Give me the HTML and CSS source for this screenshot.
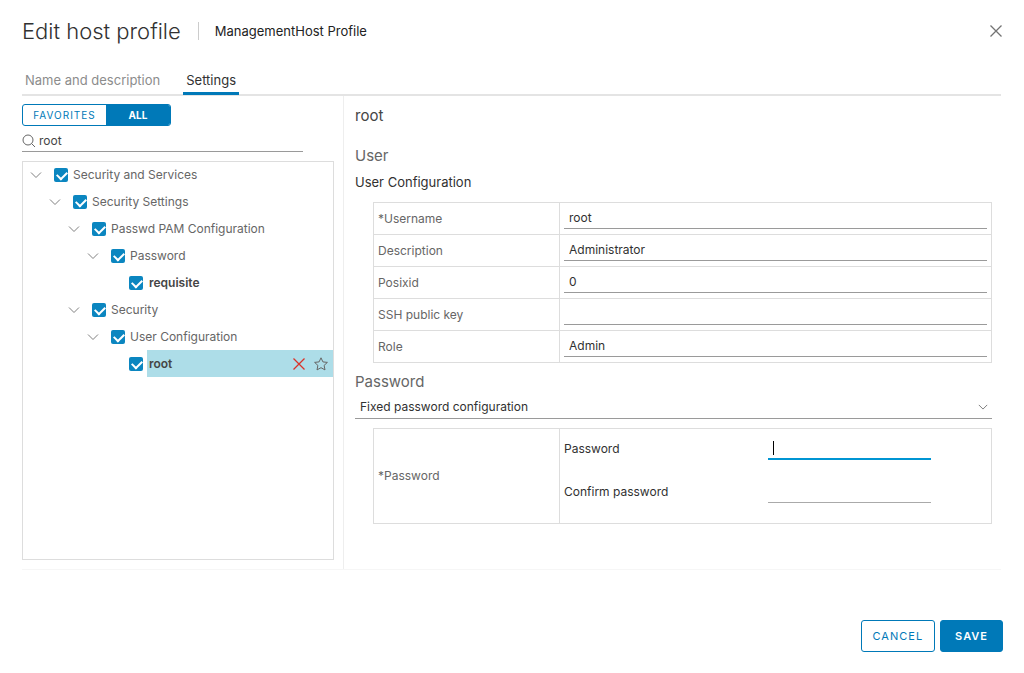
FILE: index.html
```html
<!DOCTYPE html>
<html lang="en">
  <head>
    <meta charset="utf-8">
    <title>Edit host profile</title>
    <link rel="stylesheet" href="styles.css">
  </head>

  <body>
    <svg class="sprite" aria-hidden="true">
      <symbol id="chevron" viewBox="0 0 12 12"><path d="M1 3.5l5 5 5-5" fill="none" stroke="currentColor"/></symbol>
      <symbol id="cross" viewBox="0 0 14 14"><path d="M1.5 1.5l11 11M12.5 1.5l-11 11" fill="none" stroke="currentColor" stroke-width="1.3"/></symbol>
    </svg>

    <div class="dialog">
      <header class="dialog-header">
        <h1 class="title">Edit host profile</h1>
        <span class="subtitle">ManagementHost Profile</span>
        <button class="close" aria-label="Close"><svg class="icon-close"><use href="#cross"/></svg></button>
      </header>

      <nav class="tabs">
        <a class="tab" href="#">Name and description</a>
        <a class="tab active" href="#">Settings</a>
      </nav>

      <main class="content">
        <section class="sidebar">
          <div class="toggle">
            <button class="toggle-button">FAVORITES</button>
            <button class="toggle-button selected">ALL</button>
          </div>

          <div class="search">
            <svg class="icon-search" viewBox="0 0 14 14"><circle cx="6" cy="6" r="5" fill="none" stroke="currentColor"/><path d="M9.6 9.6l3.4 3.4" stroke="currentColor"/></svg>
            <input class="search-input" type="text" value="root" aria-label="Search">
          </div>

          <ul class="tree">
            <li>
              <div class="node">
                <svg class="chevron"><use href="#chevron"/></svg>
                <input class="check" type="checkbox" id="services" checked>
                <label class="node-label" for="services">Security and Services</label>
              </div>
              <ul class="branch">
                <li>
                  <div class="node">
                    <svg class="chevron"><use href="#chevron"/></svg>
                    <input class="check" type="checkbox" id="settings" checked>
                    <label class="node-label" for="settings">Security Settings</label>
                  </div>
                  <ul class="branch">
                    <li>
                      <div class="node">
                        <svg class="chevron"><use href="#chevron"/></svg>
                        <input class="check" type="checkbox" id="pam" checked>
                        <label class="node-label" for="pam">Passwd PAM Configuration</label>
                      </div>
                      <ul class="branch">
                        <li>
                          <div class="node">
                            <svg class="chevron"><use href="#chevron"/></svg>
                            <input class="check" type="checkbox" id="passwordNode" checked>
                            <label class="node-label" for="passwordNode">Password</label>
                          </div>
                          <ul class="branch">
                            <li>
                              <div class="node leaf">
                                <input class="check" type="checkbox" id="requisite" checked>
                                <label class="node-label" for="requisite">requisite</label>
                              </div>
                            </li>
                          </ul>
                        </li>
                      </ul>
                    </li>
                    <li>
                      <div class="node">
                        <svg class="chevron"><use href="#chevron"/></svg>
                        <input class="check" type="checkbox" id="security" checked>
                        <label class="node-label" for="security">Security</label>
                      </div>
                      <ul class="branch">
                        <li>
                          <div class="node">
                            <svg class="chevron"><use href="#chevron"/></svg>
                            <input class="check" type="checkbox" id="userConfig" checked>
                            <label class="node-label" for="userConfig">User Configuration</label>
                          </div>
                          <ul class="branch">
                            <li>
                              <div class="node leaf">
                                <input class="check" type="checkbox" id="root" checked>
                                <div class="current">
                                  <label class="current-label" for="root">root</label>
                                  <button class="node-button remove" aria-label="Remove"><svg class="icon-small"><use href="#cross"/></svg></button>
                                  <button class="node-button" aria-label="Favorite"><svg class="icon-small" viewBox="0 0 14 14"><path d="M7 .8l1.9 4.1 4.5.5-3.3 3 .9 4.5L7 10.7l-4 2.2.9-4.5-3.3-3 4.5-.5z" fill="none" stroke="currentColor" stroke-linejoin="round"/></svg></button>
                                </div>
                              </div>
                            </li>
                          </ul>
                        </li>
                      </ul>
                    </li>
                  </ul>
                </li>
              </ul>
            </li>
          </ul>
        </section>

        <section class="details">
          <h2 class="heading main-heading">root</h2>
          <h3 class="heading">User</h3>
          <h4 class="subheading">User Configuration</h4>

          <table class="properties">
            <tr>
              <th class="name"><label for="username">*Username</label></th>
              <td class="value"><input class="field" type="text" id="username" value="root"></td>
            </tr>
            <tr>
              <th class="name"><label for="description">Description</label></th>
              <td class="value"><input class="field" type="text" id="description" value="Administrator"></td>
            </tr>
            <tr>
              <th class="name"><label for="posixid">Posixid</label></th>
              <td class="value"><input class="field" type="text" id="posixid" value="0"></td>
            </tr>
            <tr>
              <th class="name"><label for="sshKey">SSH public key</label></th>
              <td class="value"><input class="field" type="text" id="sshKey"></td>
            </tr>
            <tr>
              <th class="name"><label for="role">Role</label></th>
              <td class="value"><input class="field" type="text" id="role" value="Admin"></td>
            </tr>
          </table>

          <h3 class="heading password-heading">Password</h3>
          <div class="select-wrap">
            <select class="select" aria-label="Password type">
              <option>Fixed password configuration</option>
            </select>
            <svg class="select-arrow"><use href="#chevron"/></svg>
          </div>

          <table class="properties">
            <tr>
              <th class="name">*Password</th>
              <td class="passwords">
                <div class="password-row">
                  <label class="password-label" for="password">Password</label>
                  <div class="password-box editing"><input class="password-field" type="password" id="password"></div>
                </div>
                <div class="password-row">
                  <label class="password-label" for="confirm">Confirm password</label>
                  <div class="password-box"><input class="password-field" type="password" id="confirm"></div>
                </div>
              </td>
            </tr>
          </table>
        </section>
      </main>

      <footer class="dialog-footer">
        <button class="button">CANCEL</button>
        <button class="button primary">SAVE</button>
      </footer>
    </div>
  </body>
</html>
```

FILE: styles.css
```css
* {
  box-sizing: border-box;
}

body {
  margin: 0;
  background-color: #fff;
  color: #666;
  font-family: Inter, "Open Sans", sans-serif;
  font-size: 12px;
  line-height: 16px;
}

button, input, select {
  margin: 0;
  padding: 0;
  border: 0;
  border-radius: 0;
  background: none;
  color: inherit;
  font: inherit;
  outline: none;
}

h1, h2, h3, h4, ul {
  margin: 0;
  padding: 0;
  list-style: none;
  font-weight: normal;
}

.sprite {
  display: none;
}

.dialog {
  display: flex;
  flex-direction: column;
  min-height: 100vh;
  padding: 0 21px 0 22px;
}

.dialog-header {
  display: flex;
  align-items: center;
  height: 62px;
}

.title {
  padding-right: 17px;
  color: #313131;
  font-size: 22px;
  font-weight: 300;
}

.subtitle {
  padding-left: 16px;
  border-left: 1px solid #ccc;
  color: #222;
  font-size: 13px;
  line-height: 18px;
}

.close {
  display: flex;
  margin-left: auto;
  color: #737373;
}

.icon-close {
  width: 14px;
  height: 14px;
}

.tabs {
  display: flex;
  gap: 20px;
  height: 34px;
  margin-right: 2px;
  border-bottom: 2px solid #e4e4e4;
}

.tab {
  height: 33px;
  padding: 8px 3px 0;
  color: #8c8c8c;
  font-size: 13px;
  line-height: 20px;
  text-decoration: none;
}

.active {
  border-bottom: 3px solid #0079b8;
  color: #313131;
}

.content {
  display: flex;
  flex: 1;
  margin-right: 2px;
  border-bottom: 1px solid #f6f6f6;
}

.sidebar {
  display: flex;
  flex-direction: column;
  width: 322px;
  padding: 8px 9px 9px 0;
  border-right: 1px solid #eee;
}

.toggle {
  display: flex;
  width: 149px;
  height: 22px;
  border: 1px solid #0079b8;
  border-radius: 3px;
  overflow: hidden;
}

.toggle-button {
  width: 83px;
  color: #0079b8;
  font-size: 10px;
  letter-spacing: 1px;
}

.toggle-button.selected {
  flex: 1;
  background-color: #0079b8;
  color: #fff;
  font-weight: bold;
  letter-spacing: 0;
}

.search {
  display: flex;
  align-items: center;
  gap: 3px;
  width: 281px;
  height: 26px;
  margin-bottom: 9px;
  padding-top: 4px;
  border-bottom: 1px solid #9a9a9a;
}

.icon-search {
  width: 14px;
  height: 14px;
}

.search-input {
  flex: 1;
  color: #454545;
}

.tree {
  flex: 1;
  border: 1px solid #ddd;
}

.node {
  display: flex;
  align-items: center;
  height: 27px;
  padding: 0 0 2px 7px;
}

.branch .node {
  padding-left: 26px;
}

.branch .branch .node {
  padding-left: 45px;
}

.branch .branch .branch .node {
  padding-left: 64px;
}

.branch .branch .branch .node.leaf {
  padding-left: 106px;
}

.chevron {
  width: 12px;
  height: 12px;
  margin-right: 12px;
  color: #808080;
}

.check {
  appearance: none;
  width: 14px;
  height: 14px;
  margin-right: 5px;
  border-radius: 2px;
  background-color: #0b86c0;
}

.check:checked::after {
  content: "";
  display: block;
  width: 8px;
  height: 5px;
  margin: 3px;
  border: solid #fff;
  border-width: 0 0 2px 2px;
  transform: rotate(-45deg);
}

.leaf .node-label {
  font-weight: 600;
  color: #454545;
}

.leaf .check {
  margin-right: 4px;
}

.leaf .node-label {
  padding-left: 2px;
}

.current {
  display: flex;
  flex: 1;
  align-items: center;
  height: 27px;
  padding: 0 5px 0 2px;
  background-color: #addde8;
}

.current-label {
  flex: 1;
  color: #454545;
  font-weight: 600;
}

.node-button {
  display: flex;
  margin-left: 8px;
}

.remove {
  color: #d9332a;
}

.icon-small {
  width: 14px;
  height: 14px;
}

.details {
  flex: 1;
  padding: 9px 9px 0 11px;
}

.heading {
  font-size: 15px;
  line-height: 22px;
}

.main-heading {
  margin-bottom: 18px;
  color: #454545;
}

.subheading {
  margin: 7px 0 12px;
  color: #313131;
  font-size: 13px;
}

.properties {
  width: calc(100% - 18px);
  margin-left: 18px;
  border-collapse: collapse;
  table-layout: fixed;
}

.name, .value, .passwords {
  border: 1px solid #ddd;
  text-align: left;
}

.name {
  width: 186px;
  padding: 0 4px;
  font-weight: normal;
}

.value {
  height: 32px;
  padding: 3px 4px 5px;
}

.field {
  display: block;
  width: 100%;
  height: 23px;
  padding: 0 5px;
  border-bottom: 1px solid #9a9a9a;
  color: #313131;
}

.password-heading {
  margin-top: 8px;
}

.select-wrap {
  display: flex;
  align-items: center;
  height: 26px;
  margin-bottom: 9px;
  padding-top: 3px;
  border-bottom: 1px solid #9a9a9a;
}

.select {
  appearance: none;
  flex: 1;
  padding-left: 5px;
  color: #313131;
}

.select-arrow {
  width: 10px;
  height: 10px;
  margin-right: 4px;
}

.passwords {
  padding: 9px 4px;
  color: #313131;
}

.password-row {
  display: flex;
  align-items: center;
  height: 22px;
}

.password-row + .password-row {
  margin: 21px 0 11px;
}

.password-label {
  width: 204px;
}

.password-box {
  position: relative;
  width: 163px;
  height: 22px;
  border-bottom: 1px solid #aaa;
}

.password-field {
  width: 100%;
  height: 20px;
  padding: 0 5px;
}

.editing {
  border-bottom: 2px solid #0095d3;
}

/* text cursor */
.editing::before {
  content: "";
  position: absolute;
  top: 3px;
  left: 5px;
  width: 1px;
  height: 14px;
  background-color: #000;
}

.dialog-footer {
  display: flex;
  justify-content: flex-end;
  gap: 5px;
  padding: 50px 0 21px;
}

.button {
  height: 32px;
  padding: 0 11px;
  border: 1px solid #0079b8;
  border-radius: 3px;
  color: #0079b8;
  font-size: 11px;
  letter-spacing: 1px;
}

.primary {
  padding: 0 14px;
  background-color: #0079b8;
  color: #fff;
  font-weight: 600;
}
```
